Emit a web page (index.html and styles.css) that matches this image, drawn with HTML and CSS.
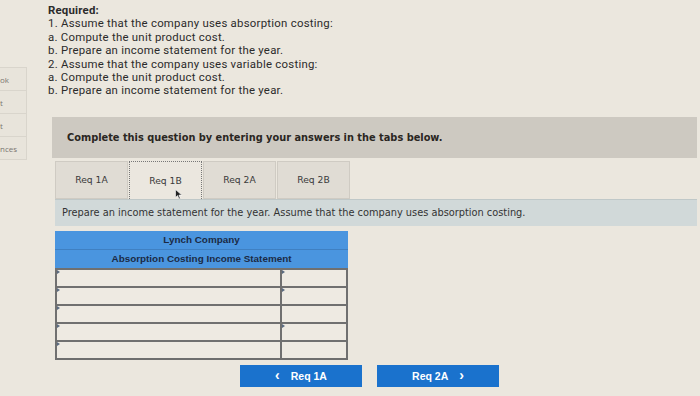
FILE: index.html
```html
<!DOCTYPE html>
<html>
<head>
<meta charset="utf-8">
<link rel="stylesheet" href="styles.css">
</head>
<body>
<div class="page">
  <div class="sidebar">
    <div class="side-item">ok</div>
    <div class="side-item">t</div>
    <div class="side-item">t</div>
    <div class="side-item">nces</div>
  </div>
  <div class="main">
    <div class="required">
      <div class="req-title">Required:</div>
      <div>1. Assume that the company uses absorption costing:</div>
      <div>a. Compute the unit product cost.</div>
      <div>b. Prepare an income statement for the year.</div>
      <div>2. Assume that the company uses variable costing:</div>
      <div>a. Compute the unit product cost.</div>
      <div>b. Prepare an income statement for the year.</div>
    </div>
    <div class="complete-bar">Complete this question by entering your answers in the tabs below.</div>
    <div class="tabs">
      <div class="tab">Req 1A</div>
      <div class="tab active">Req 1B
        <svg class="cursor" width="8" height="11" viewBox="0 0 8 11"><path d="M0.5 0.5 L0.5 8.5 L2.6 6.6 L4 10 L5.3 9.4 L3.9 6.1 L6.8 6.1 Z" fill="#222" stroke="#fff" stroke-width="0.6"/></svg>
      </div>
      <div class="tab">Req 2A</div>
      <div class="tab">Req 2B</div>
    </div>
    <div class="instr">Prepare an income statement for the year. Assume that the company uses absorption costing.</div>
    <div class="statement">
      <div class="st-head">Lynch Company</div>
      <div class="st-head st-sub">Absorption Costing Income Statement</div>
      <div class="st-row"><div class="cell c1 mark"></div><div class="cell c2 mark"></div></div>
      <div class="st-row"><div class="cell c1 mark"></div><div class="cell c2 mark"></div></div>
      <div class="st-row"><div class="cell c1 mark"></div><div class="cell c2"></div></div>
      <div class="st-row"><div class="cell c1 mark"></div><div class="cell c2 mark"></div></div>
      <div class="st-row"><div class="cell c1 mark"></div><div class="cell c2"></div></div>
    </div>
    <div class="nav">
      <div class="btn"><span class="chev">&lsaquo;</span> Req 1A</div>
      <div class="btn">Req 2A <span class="chev">&rsaquo;</span></div>
    </div>
  </div>
</div>
</body>
</html>
```

FILE: styles.css
```css
html, body {
  margin: 0;
  padding: 0;
  background: #ebe7de;
  width: 700px;
  height: 396px;
  overflow: hidden;
}
.page {
  display: flex;
  width: 700px;
  height: 396px;
  font-family: "Open Sans", "Liberation Sans", sans-serif;
  color: #2a2a2a;
}
.sidebar {
  width: 27px;
  padding-top: 67px;
  display: flex;
  flex-direction: column;
}
.side-item {
  height: 22px;
  border: 1px solid #d9d5cc;
  border-left: none;
  margin-bottom: -1px;
  background: #e8e4db;
  font-size: 8px;
  color: #7a7670;
  display: flex;
  align-items: center;
  overflow: hidden;
  white-space: nowrap;
  justify-content: flex-end;
  padding-right: 6px;
  direction: rtl;
}
.main {
  flex: 1;
  padding-left: 21px;
  display: flex;
  flex-direction: column;
}
.required {
  font-family: Roboto, "Open Sans", sans-serif;
  font-size: 11.4px;
  line-height: 13.4px;
  letter-spacing: 0.25px;
  padding-top: 4px;
  color: #2b2b2b;
}
.req-title {
  font-weight: 700;
  font-size: 11.4px;
  letter-spacing: 0.2px;
}
.complete-bar {
  margin-top: 19px;
  margin-left: 4px;
  width: 630px;
  height: 41px;
  padding-left: 15px;
  display: flex;
  align-items: center;
  background: #cdc9c1;
  font-family: "DejaVu Sans", Verdana, sans-serif;
  font-weight: 700;
  font-size: 9.8px;
  color: #2a2622;
}
.tabs {
  margin-top: 3px;
  margin-left: 7px;
  display: flex;
  height: 38px;
}
.tab {
  width: 71px;
  border: 1px solid #cfcbc3;
  background: #e0dcd4;
  font-family: "DejaVu Sans", Verdana, sans-serif;
  font-size: 9.2px;
  color: #3a3a3a;
  display: flex;
  align-items: center;
  justify-content: center;
  margin-right: 1px;
  position: relative;
}
.tab.active {
  background: #ebe7df;
  border: 1px dotted #777;
  border-bottom: none;
}
.cursor {
  position: absolute;
  left: 45px;
  top: 27px;
}
.instr {
  box-sizing: border-box;
  margin-left: 7px;
  width: 642px;
  height: 27px;
  padding-left: 7px;
  display: flex;
  align-items: center;
  background: #d1d9d9;
  border-top: 1px solid #bfc8c8;
  font-family: "DejaVu Sans", Verdana, sans-serif;
  font-size: 9.8px;
  color: #333;
}
.statement {
  margin-top: 5px;
  margin-left: 7px;
  width: 293px;
  border-bottom: 2px solid #6e6e6e;
}
.st-head {
  height: 18px;
  background: #4a95df;
  border-bottom: 1px solid #3f80c2;
  font-family: "Liberation Sans", Arial, sans-serif;
  font-weight: 700;
  font-size: 9.9px;
  color: #1b2a44;
  display: flex;
  align-items: center;
  justify-content: center;
}
.st-sub {
  height: 18px;
  border-bottom: none;
}
.st-row {
  display: flex;
  height: 18px;
}
.cell {
  box-sizing: border-box;
  height: 18px;
  background: #eeeae2;
  border-top: 2px solid #707070;
  position: relative;
}
.c1 {
  width: 226px;
  border-left: 2px solid #707070;
  border-right: 1px solid #707070;
}
.c2 {
  flex: 1;
  border-left: 1px solid #707070;
  border-right: 2px solid #707070;
}
.mark::before {
  content: "";
  position: absolute;
  left: 0;
  top: 0;
  border-left: 3px solid #5a6a80;
  border-top: 2px solid transparent;
  border-bottom: 2px solid transparent;
}
.nav {
  margin-top: 5px;
  margin-left: 192px;
  display: flex;
  gap: 15px;
}
.btn {
  width: 122px;
  height: 22px;
  background: #1a72cd;
  color: #fff;
  font-family: "Liberation Sans", Arial, sans-serif;
  font-weight: 700;
  font-size: 10.5px;
  display: flex;
  align-items: center;
  justify-content: center;
  gap: 11px;
}
.chev {
  font-size: 14px;
  font-weight: 700;
  line-height: 1;
  margin-top: -2px;
}
```
